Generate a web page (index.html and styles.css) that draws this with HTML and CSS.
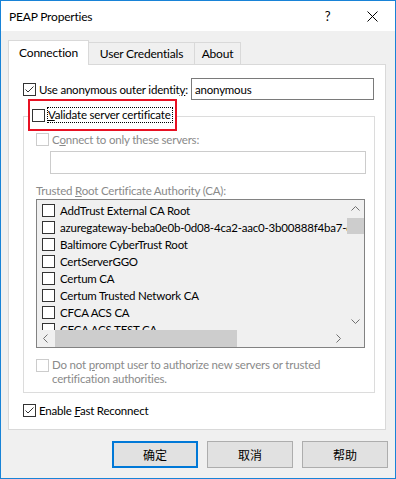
FILE: index.html
```html
<!DOCTYPE html>
<html>
  <head>
    <meta charset="utf-8" />
    <title>PEAP Properties</title>
    <link rel="stylesheet" href="styles.css">
  </head>
  <body>
    <div class="window">
      <div class="titlebar">
        <span class="title">PEAP Properties</span>
        <span class="tb-btn help">?</span>
        <span class="tb-btn">
          <svg width="11" height="11" viewBox="0 0 11 11">
            <path d="M0.5 0.5 L10.5 10.5 M10.5 0.5 L0.5 10.5" stroke="#000" stroke-width="1" fill="none" />
          </svg>
        </span>
      </div>

      <div class="client">
        <div class="tabs">
          <div class="tab selected">Connection</div>
          <div class="tab tab-cred">User Credentials</div>
          <div class="tab tab-about">About</div>
        </div>

        <div class="panel">
          <div class="identity">
            <div class="opt">
              <span class="check checked">
                <svg width="11" height="11" viewBox="0 0 11 11">
                  <path d="M1.5 5.5 L4 8 L9.5 2.5" stroke="#333" stroke-width="1" fill="none" />
                </svg>
              </span>
              <span>Use anonymous outer identit<u>y</u>:</span>
            </div>
            <div class="textbox">anonymous</div>
          </div>

          <div class="group">
            <div class="legend">
              <span class="check"></span>
              <span class="focus"><u>V</u>alidate server certificate</span>
            </div>

            <div class="opt indent disabled">
              <span class="check"></span>
              <span>C<u>o</u>nnect to only these servers:</span>
            </div>
            <div class="servers"></div>

            <div class="label disabled">Trusted <u>R</u>oot Certificate Authority (CA):</div>
            <div class="list">
              <div class="items">
                <div class="item"><span class="check"></span>AddTrust External CA Root</div>
                <div class="item"><span class="check"></span>azuregateway-beba0e0b-0d08-4ca2-aac0-3b00888f4ba7-d</div>
                <div class="item"><span class="check"></span>Baltimore CyberTrust Root</div>
                <div class="item"><span class="check"></span>CertServerGGO</div>
                <div class="item"><span class="check"></span>Certum CA</div>
                <div class="item"><span class="check"></span>Certum Trusted Network CA</div>
                <div class="item"><span class="check"></span>CFCA ACS CA</div>
                <div class="item"><span class="check"></span>CFCA ACS TEST CA</div>
              </div>
              <div class="vscroll">
                <span class="arrow">
                  <svg width="9" height="5" viewBox="0 0 9 5"><path d="M0.5 4.5 L4.5 0.5 L8.5 4.5" stroke="#707070" fill="none" /></svg>
                </span>
                <span class="vthumb"></span>
                <span class="arrow down">
                  <svg width="9" height="5" viewBox="0 0 9 5"><path d="M0.5 0.5 L4.5 4.5 L8.5 0.5" stroke="#707070" fill="none" /></svg>
                </span>
              </div>
              <div class="hscroll">
                <span class="arrow">
                  <svg width="5" height="9" viewBox="0 0 5 9"><path d="M4.5 0.5 L0.5 4.5 L4.5 8.5" stroke="#707070" fill="none" /></svg>
                </span>
                <span class="hthumb"></span>
                <span class="arrow right">
                  <svg width="5" height="9" viewBox="0 0 5 9"><path d="M0.5 0.5 L4.5 4.5 L0.5 8.5" stroke="#707070" fill="none" /></svg>
                </span>
              </div>
              <div class="corner"></div>
            </div>

            <div class="prompt disabled">
              <span class="check"></span>
              <span>Do not <u>p</u>rompt user to authorize new servers or trusted<br>certification authorities.</span>
            </div>
          </div>

          <div class="opt fast">
            <span class="check checked">
              <svg width="11" height="11" viewBox="0 0 11 11">
                <path d="M1.5 5.5 L4 8 L9.5 2.5" stroke="#333" stroke-width="1" fill="none" />
              </svg>
            </span>
            <span>Enable <u>F</u>ast Reconnect</span>
          </div>
        </div>

        <div class="buttons">
          <div class="button default">确定</div>
          <div class="button">取消</div>
          <div class="button">帮助</div>
        </div>
      </div>
    </div>
  </body>
</html>
```

FILE: styles.css
```css
* {
  box-sizing: border-box;
}
body {
  margin: 0;
  font-family: "Lato", "Noto Sans CJK SC", sans-serif;
  font-size: 11.5px;
  letter-spacing: -0.2px;
  color: #000;
}
.window {
  width: 396px;
  height: 479px;
  border: 1px solid #1883d7;
  background-color: #f0f0f0;
  display: flex;
  flex-direction: column;
}
.titlebar {
  height: 30px;
  flex-shrink: 0;
  background-color: #fff;
  display: flex;
  align-items: center;
  padding-left: 8px;
}
.title {
  flex: 1;
  font-size: 12px;
}
.tb-btn {
  width: 46px;
  height: 30px;
  display: flex;
  align-items: center;
  justify-content: center;
}
.tb-btn.help {
  padding-left: 3px;
  font-size: 13px;
}

.client {
  flex: 1;
  padding: 9px 7px 0 7px;
}

/* tabs */
.tabs {
  display: flex;
  align-items: flex-end;
  height: 24px;
}
.tab {
  height: 22px;
  margin-left: -1px;
  border: 1px solid #d9d9d9;
  border-bottom: none;
  background-color: #f0f0f0;
  display: flex;
  align-items: center;
  justify-content: center;
  font-size: 12px;
}
.tab.selected {
  width: 81px;
  height: 25px;
  margin-left: 0;
  margin-bottom: -1px;
  padding-bottom: 1px;
  background-color: #fff;
  position: relative;
  z-index: 1;
}
.tab-cred {
  width: 107px;
}
.tab-about {
  width: 47px;
}

.panel {
  width: 378px;
  height: 366px;
  border: 1px solid #d9d9d9;
  background-color: #fff;
  padding: 13px 10px 0 14px;
}

/* checkboxes */
.check {
  width: 13px;
  height: 13px;
  flex-shrink: 0;
  border: 1px solid #333;
  background-color: #fff;
  display: inline-block;
}
.check svg {
  display: block;
}
.disabled {
  color: #8a8a8a;
}
.disabled .check {
  border-color: #cccccc;
}
.opt {
  display: flex;
  align-items: center;
  gap: 3px;
  height: 13px;
  white-space: nowrap;
}

.identity {
  display: flex;
  align-items: center;
  height: 22px;
}
.textbox {
  margin-left: auto;
  margin-right: 1px;
  width: 183px;
  height: 22px;
  border: 1px solid #7a7a7a;
  padding-left: 3px;
  display: flex;
  align-items: center;
}

/* group box */
.group {
  margin-top: 16px;
  height: 277px;
  border: 1px solid #dcdcdc;
}
.legend {
  margin: -18px 0 0 4px;
  width: 149px;
  height: 32px;
  border: 2px solid #e81123;
  background-color: #fff;
  padding-left: 2px;
  display: flex;
  align-items: center;
  gap: 2px;
  white-space: nowrap;
}
.focus {
  border: 1px dotted #000;
  line-height: 14px;
  padding-right: 1px;
}
.indent {
  margin: 2px 0 0 12px;
}
.servers {
  margin: 5px 0 0 26px;
  width: 316px;
  height: 23px;
  border: 1px solid #cccccc;
  background-color: #fff;
}
.label {
  margin: 9px 0 0 12px;
  line-height: 15px;
}

/* certificate list */
.list {
  margin: 1px 0 0 12px;
  width: 329px;
  height: 149px;
  border: 1px solid #828282;
  background-color: #f0f0f0;
  display: grid;
  grid-template-columns: minmax(0, 1fr) 17px;
  grid-template-rows: minmax(0, 1fr) 17px;
}
.items {
  overflow: hidden;
  padding-top: 2px;
}
.item {
  height: 17px;
  display: flex;
  align-items: center;
  gap: 5px;
  padding-left: 5px;
  white-space: nowrap;
}
.vscroll {
  display: flex;
  flex-direction: column;
}
.hscroll {
  display: flex;
}
.arrow {
  width: 17px;
  height: 17px;
  flex-shrink: 0;
  display: flex;
  align-items: center;
  justify-content: center;
}
.arrow.down {
  margin-top: auto;
}
.arrow.right {
  margin-left: auto;
}
.vthumb {
  height: 16px;
  margin-top: 1px;
  background-color: #cdcdcd;
}
.hthumb {
  width: 182px;
  margin-left: 1px;
  background-color: #cdcdcd;
}
.corner {
  background-color: #f0f0f0;
}

.prompt {
  margin: 10px 0 0 12px;
  display: flex;
  align-items: flex-start;
  gap: 3px;
  line-height: 14px;
}
.prompt .check {
  margin-top: 1px;
}

.fast {
  margin-top: 11px;
}

/* dialog buttons */
.buttons {
  margin-top: 11px;
  display: flex;
  justify-content: flex-end;
  gap: 9px;
}
.button {
  width: 86px;
  height: 27px;
  border: 1px solid #adadad;
  background-color: #e1e1e1;
  display: flex;
  align-items: center;
  justify-content: center;
  font-family: "Noto Sans CJK SC", sans-serif;
  font-size: 12px;
  letter-spacing: 0;
}
.button.default {
  border: 2px solid #0078d7;
}
```
